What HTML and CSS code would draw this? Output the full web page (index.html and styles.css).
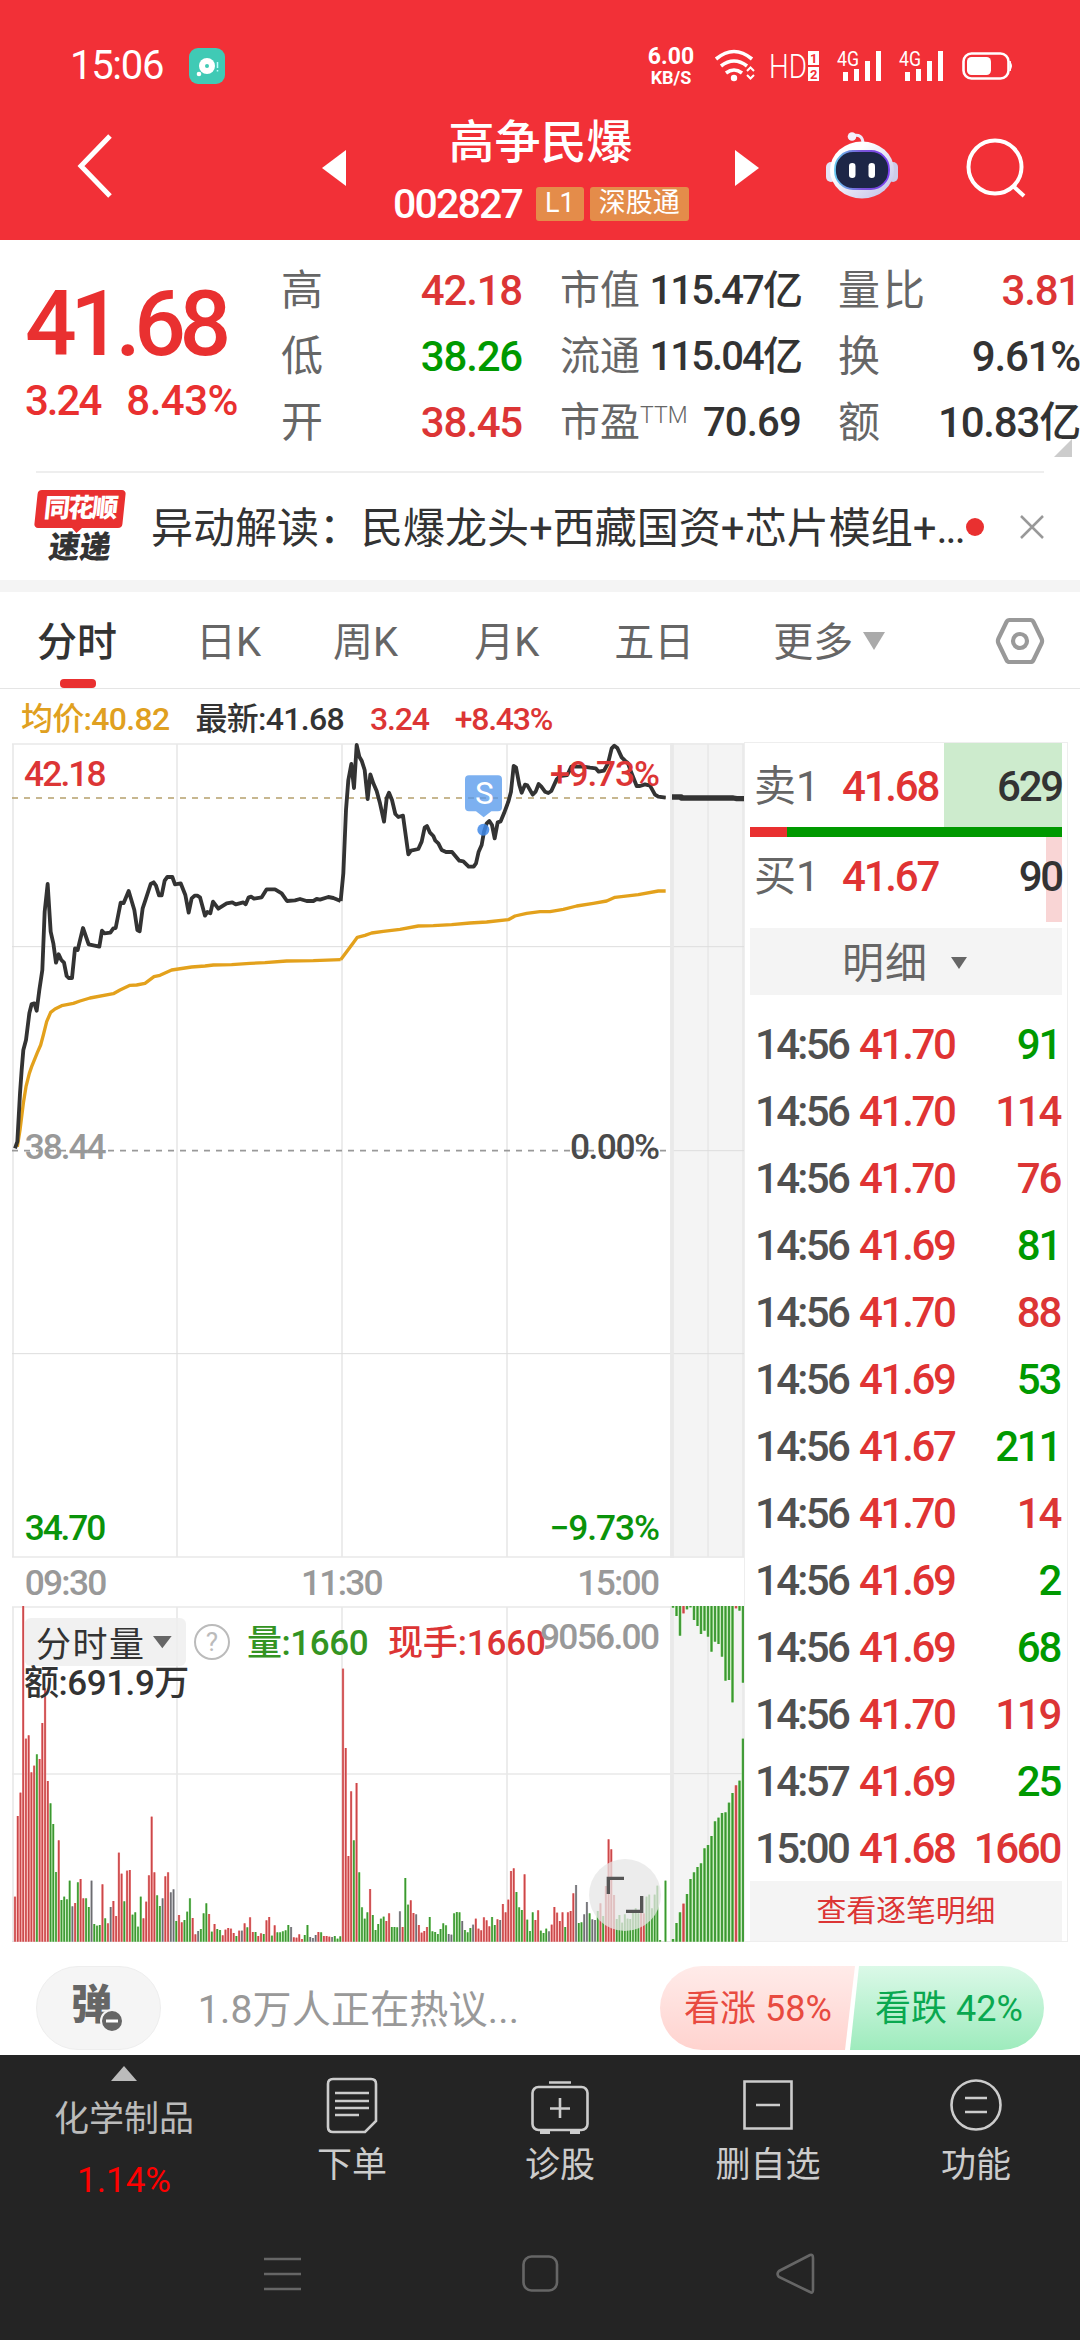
FILE: index.html
```html
<!doctype html>
<html lang="zh-CN">
<head>
<meta charset="utf-8">
<title>高争民爆 002827</title>
<link rel="stylesheet" href="styles.css">
</head>
<body>
<header>
  <div class="status">
    <span class="clock">15:06</span>
    <svg class="app" width="36" height="36" viewBox="0 0 36 36">
      <rect width="36" height="36" rx="9" fill="#40cab5"/>
      <circle cx="18" cy="18" r="8" fill="#fff"/><circle cx="18" cy="18" r="2" fill="#40cab5"/>
      <circle cx="10" cy="26" r="2.3" fill="#fff"/><path d="M28.500 14v6M28.500 22v1.500" stroke="#bff" stroke-width="1.500"/>
    </svg>
    <span class="speed"><b>6.00</b><i>KB/S</i></span>
    <svg class="signals" width="300" height="46" viewBox="712 43 300 46" fill="none" stroke="#fff">
      <path d="M715 59Q733 44 751 59M720 66Q733 56 746 66M725 73Q733 67 741 73" stroke-width="3.600"/>
      <circle cx="733" cy="78" r="3.200" fill="#fff" stroke="none"/>
      <path d="M746 71l3.500-3.500 3.500 3.500M746 75l3.500 3.500 3.500-3.500" stroke-width="2"/>
      <text x="768" y="78" class="hd" textLength="38" lengthAdjust="spacingAndGlyphs">HD</text>
      <path d="M807 51h11v14h-11zM807 67h11v14h-11z" fill="#fff" stroke="none"/>
      <text x="809" y="62.500" class="sim">1</text><text x="809" y="78.500" class="sim">2</text>
      <text x="836" y="66" class="g4" textLength="22" lengthAdjust="spacingAndGlyphs">4G</text>
      <path d="M844.500 72v9M855.500 69v12M866.500 61v20M877.500 51v30" stroke-width="5"/>
      <text x="898" y="66" class="g4" textLength="22" lengthAdjust="spacingAndGlyphs">4G</text>
      <path d="M906.500 72v9M917.500 69v12M928.500 61v20M939.500 51v30" stroke-width="5"/>
      <rect x="962.500" y="53.500" width="45" height="25" rx="8" stroke-width="2.600"/>
      <rect x="966" y="57" width="24" height="18" rx="4.500" fill="#fff" stroke="none"/>
      <path d="M1009 61q3 5 0 10z" fill="#fff"/>
    </svg>
  </div>
  <div class="titlebar">
    <svg class="back" width="40" height="68" viewBox="0 0 40 68"><path d="M37 4L8 34l29 30" fill="none" stroke="#fff" stroke-width="5"/></svg>
    <svg class="prev" width="24" height="36" viewBox="0 0 24 36"><path d="M24 0v36L0 18z" fill="#fff"/></svg>
    <div class="stock">
      <h1>高争民爆</h1>
      <p><span class="code">002827</span><em>L1</em><em>深股通</em></p>
    </div>
    <svg class="next" width="24" height="36" viewBox="0 0 24 36"><path d="M0 0v36L24 18z" fill="#fff"/></svg>
    <svg class="robot" width="74" height="68" viewBox="0 0 74 68">
      <defs>
        <linearGradient id="shell" x1="0" y1="0" x2="1" y2="1"><stop offset=".3" stop-color="#fff"/><stop offset="1" stop-color="#bdbce6"/></linearGradient>
        <linearGradient id="rim"><stop offset="0" stop-color="#67c7ef"/><stop offset=".5" stop-color="#7a55d8"/><stop offset="1" stop-color="#7b3ff0"/></linearGradient>
      </defs>
      <path d="M27 5q11-3 11 8" fill="none" stroke="#eee9fa" stroke-width="3"/>
      <circle cx="27" cy="5.500" r="4.300" fill="#f4f0fd"/>
      <rect x="1" y="31" width="10" height="20" rx="5" fill="#e4e3f5"/><rect x="63" y="31" width="10" height="20" rx="5" fill="#cccbe8"/>
      <ellipse cx="37" cy="39" rx="32" ry="28.500" fill="url(#shell)"/>
      <rect x="10" y="20" width="54" height="38" rx="18" fill="#1d2647" stroke="url(#rim)" stroke-width="1.800"/>
      <rect x="24" y="32" width="6.500" height="15" rx="3.200" fill="#fff"/><rect x="43.500" y="32" width="6.500" height="15" rx="3.200" fill="#fff"/>
    </svg>
    <svg class="search" width="62" height="62" viewBox="0 0 62 62" fill="none" stroke="#fff" stroke-width="4"><circle cx="29" cy="29" r="26.500"/><path d="M47 48l11 10"/></svg>
  </div>
</header>

<section class="quote">
  <div class="price"><strong>41.68</strong><p><span>3.24</span><span class="pct">8.43%</span></p></div>
  <dl>
    <div><dt>高</dt><dd class="red">42.18</dd></div>
    <div><dt>低</dt><dd class="green">38.26</dd></div>
    <div><dt>开</dt><dd class="red">38.45</dd></div>
  </dl>
  <dl class="cap">
    <div><dt>市值</dt><dd>115.47亿</dd></div>
    <div><dt>流通</dt><dd>115.04亿</dd></div>
    <div><dt>市盈<sup>TTM</sup></dt><dd class="pe">70.69</dd></div>
  </dl>
  <dl>
    <div><dt class="wide">量比</dt><dd class="red">3.81</dd></div>
    <div><dt>换</dt><dd>9.61%</dd></div>
    <div><dt>额</dt><dd>10.83亿</dd></div>
  </dl>
  <i class="corner"></i>
</section>

<section class="news">
  <div class="logo"><span>同花顺</span><b>速递</b></div>
  <p>异动解读<span class="colon">：</span>民爆龙头+西藏国资+芯片模组+<span class="dots">...</span></p>
  <i class="dot"></i>
  <svg width="24" height="24" viewBox="0 0 24 24"><path d="M1 1l22 22M23 1L1 23" stroke="#999" stroke-width="2.500"/></svg>
</section>

<nav class="tabs">
  <a class="active">分时</a><a>日K</a><a>周K</a><a>月K</a><a>五日</a><a>更多<i></i></a>
  <svg width="50" height="48" viewBox="0 0 50 48" fill="none" stroke="#999" stroke-width="4.200" stroke-linejoin="round"><path d="M14.500 3h21q2 0 3 2l8 16.500q1.200 2.500 0 5L38.500 43q-1 2-3 2h-21q-2 0-3-2l-8-16.500q-1.200-2.500 0-5L11.500 5q1-2 3-2z"/><circle cx="25" cy="24" r="7"/></svg>
</nav>

<div class="summary">
  <span class="avg">均价:40.82</span><span>最新:41.68</span><span class="red">3.24</span><span class="red">+8.43%</span>
</div>

<main>
  <!-- chart units are a third of a pixel -->
  <svg class="chart" width="744" height="1200" viewBox="0 66 2232 3600">
    <rect x="2010" y="70" width="222" height="3595" fill="#f4f4f4"/>
    <g stroke="#e9e9e9" stroke-width="5" fill="none">
      <path d="M36 72H2232M36 2511H2232M39 70V2513M531 70V2513M1026 70V2513M1521 70V2513M2124 70V2513M2229 70V2513"/>
      <path d="M36 2661H2232M36 3162H2014M39 2659V3665M531 2659V3665M1026 2659V3665M1521 2659V3665M2124 2659V3665M2229 2659V3665"/>
      <path d="M36 680H2232M36 1901H2232M2018 1292H2232M2018 3161H2232M36 3665H2232" stroke="#ddd" stroke-width="3"/>
      <path d="M2016 70V3665" stroke-width="11"/>
    </g>
    <rect x="36" y="2514" width="2196" height="144" fill="#fff"/>
    <path d="M36 234H2000" stroke="#b5a06c" stroke-width="5" stroke-dasharray="18 18"/>
    <path d="M36 1292H2000" stroke="#999" stroke-width="5" stroke-dasharray="18 18"/>
    <g id="bars"></g>
    <g class="avgline">
      <polyline points="52,1280 60,1230 70,1150 78,1100 88,1060 95,1040 105,1015 112,998 122,975 130,945 140,905 152,877 165,867 185,857 220,850 240,843 270,834 340,821 360,810 390,796 410,795 435,790 462,770 480,766 515,750 575,741 615,738 640,735 695,734 750,730 795,728 860,723 940,722 1022,719"/>
      <polyline transform="translate(990)" points="32,719 50,695 60,682 70,668 82,652 105,646 125,639 160,634 210,628 265,618 310,617 365,614 420,609 470,606 535,599 555,588 590,580 630,575 660,575 700,568 740,558 790,550 830,543 855,532 925,524 985,513 1007,513"/>
    </g>
    <g class="priceline">
      <polyline points="45,1285 52,1265 60,1120 65,1050 70,990 78,960 88,880 95,852 103,850 110,872 118,810 127,750 134,575 143,492 152,635 160,670 168,728 176,703 184,720 192,728 200,768 206,774 216,774 225,685 233,690 249,624 266,673 298,680 306,632 313,640 331,638 340,625 347,624 362,548 371,549 386,513 403,570 412,630 419,634 428,565 437,538 452,492 461,487 468,497 477,526 485,526 494,482 502,471 517,471 525,493 542,490 556,525 566,578 575,535 584,527 592,527 600,532 615,587 622,576 631,580 639,545 655,566 680,550 697,547 707,553 730,547 737,553 746,532 754,530 762,536 785,532 800,508 825,508 845,520 861,543 885,541 900,537 920,543 940,543 950,537 960,539 985,531 1000,534 1022,543"/>
      <polyline transform="translate(990)" points="32,543 40,460 48,270 55,180 64,132 72,204 80,75 88,110 95,122 104,150 113,237 121,163 130,190 140,213 150,250 162,305 170,235 177,218 186,240 196,282 205,291 219,287 235,403 243,392 265,387 275,365 284,323 291,318 300,338 310,348 316,362 325,370 335,390 348,396 366,396 388,422 400,424 416,440 431,440 438,430 446,395 455,375 462,335 470,310 478,303 486,315 494,355 503,307 512,304 522,280 535,245 543,215 551,138 558,142 568,195 575,218 585,194 592,196 608,224 617,215 626,192 634,200 645,215 655,219 664,213 680,178 690,168 712,165 724,140 760,140 780,143 797,145 806,155 822,152 834,130 845,85 853,77 862,84 875,112 885,122 893,128 905,160 920,198 930,198 945,193 960,197 975,224 985,230 1007,233"/>
      <path d="M2016 231H2044V234H2200L2210 236H2232" stroke-width="16"/>
    </g>
    <path d="M1407 166h87q12 0 12 12v84q0 12-12 12h-20l-23 18-23-18h-21q-12 0-12-12v-84q0-12 12-12z" fill="#5598ec" opacity=".77"/>
    <circle cx="1450" cy="329" r="18" fill="#3f88e8" opacity=".85"/>
    <text x="1425" y="251" class="flag" textLength="56" lengthAdjust="spacingAndGlyphs">S</text>
    <g class="axis">
      <text x="72" y="197" textLength="248" fill="#dc3535">42.18</text>
      <text x="1650" y="197" textLength="330" fill="#dc3535">+9.73%</text>
      <text x="74" y="1317" textLength="246" fill="#999">38.44</text>
      <text x="1710" y="1317" textLength="270" fill="#4a4a4a">0.00%</text>
      <text x="74" y="2461" textLength="245" fill="#0a930a">34.70</text>
      <text x="1648" y="2461" textLength="332" fill="#0a930a">−9.73%</text>
      <text x="74" y="2625" textLength="248" fill="#999">09:30</text>
      <text x="903" y="2625" textLength="248" fill="#999">11:30</text>
      <text x="1732" y="2625" textLength="248" fill="#999">15:00</text>
    </g>
    <rect x="74" y="2694" width="484" height="144" rx="18" fill="#eee" opacity=".85"/>
    <text x="108" y="2810" class="vol" textLength="324" fill="#333">分时量</text>
    <path d="M459 2748h56l-28 37z" fill="#666"/>
    <circle cx="636" cy="2766" r="51" fill="none" stroke="#bbb" stroke-width="6"/>
    <text x="636" y="2792" class="help">?</text>
    <g class="vol">
      <text x="741" y="2804" textLength="365" fill="#339422">量:1660</text>
      <text x="1164" y="2804" textLength="474" fill="#dc3535">现手:1660</text>
      <text x="72" y="2924" textLength="496" fill="#333">额:691.9万</text>
    </g>
    <g class="axis"><text x="1620" y="2786" textLength="360" fill="#999">9056.00</text></g>
    <circle cx="1875" cy="3525" r="108" fill="#e6e6e6" opacity=".75"/>
    <path d="M1825 3522V3475H1872M1925 3528V3574H1878" fill="none" stroke="#555" stroke-width="10"/>
  </svg>

  <aside>
    <div class="book sell"><span>卖1</span><b>41.68</b><i>629</i></div>
    <div class="ratio"><i></i></div>
    <div class="book buy"><span>买1</span><b>41.67</b><i>90</i></div>
    <div class="detail">明细<i></i></div>
    <table id="ticks"></table>
    <div class="more">查看逐笔明细</div>
  </aside>
</main>

<section class="talk">
  <span class="danmu">弹<svg width="24" height="26" viewBox="0 0 24 26"><circle cx="12" cy="13" r="11" fill="#666" stroke="#f5f5f5" stroke-width="2"/><path d="M6 13h12" stroke="#fff" stroke-width="3"/></svg></span>
  <p>1.8万人正在热议...</p>
  <div class="vote"><span class="up">看涨 58%</span><span class="down">看跌 42%</span></div>
</section>

<footer>
  <div class="toolbar">
    <div class="sector"><i></i><span>化学制品</span><em>1.14%</em></div>
    <div class="order"><svg width="60" height="60" viewBox="0 0 60 60"><path d="M11 4h38q5 0 5 5v37L43 57H11q-5 0-5-5V9q0-5 5-5z"/><path d="M13 18h34M13 26h34M13 33h34M13 40h24"/></svg><span>下单</span></div>
    <div class="diag"><svg width="60" height="60" viewBox="0 0 60 60"><rect x="2.500" y="12" width="55" height="43" rx="6"/><path d="M19 7.500h22M30 23v20M20 33.500h20"/><path d="M10 57h10M40 57h10" stroke-width="4"/></svg><span>诊股</span></div>
    <div class="del"><svg width="60" height="60" viewBox="0 0 60 60"><path d="M6.500 6.500h47v47h-47zM18 30h24"/></svg><span>删自选</span></div>
    <div class="func"><svg width="60" height="60" viewBox="0 0 60 60"><circle cx="30" cy="30" r="24.500"/><path d="M19 23h22M19 37h22"/></svg><span>功能</span></div>
  </div>
  <svg class="keys" width="1080" height="60" viewBox="0 0 1080 60" fill="none" stroke="#666" stroke-width="2.600">
    <path d="M264 15h37M264 30h37M264 45h37"/>
    <rect x="523.500" y="12.500" width="33.500" height="34" rx="8"/>
    <path d="M779 27L810 11q3-1 3 3v32q0 4-3 2L779 33q-3-3 0-6z"/>
  </svg>
</footer>
<script src="chart.js"></script>
</body>
</html>
```
FILE: styles.css
```css
* {
  box-sizing: border-box;
}
body, h1, p, dl, dd {
  margin: 0;
}
body {
  width: 1080px;
  height: 2340px;
  overflow: hidden;
  display: flex;
  flex-direction: column;
  background: #fff;
  color: #333;
  font-family: Roboto, "Noto Sans CJK SC", sans-serif;
  font-size: 42px;
  line-height: 1;
}
i, em {
  font-style: normal;
}
svg {
  display: block;
  flex: none;
}
.red { color: #dc3535; }
.green { color: #009900; }

/* header */
header {
  height: 240px;
  background: #f23037;
  color: #fff;
}
.status {
  display: flex;
  align-items: center;
  height: 96px;
  padding: 36px 0 0 70px;
}
.clock {
  width: 119px;
  font-size: 40px;
  letter-spacing: -1.3px;
}
.speed {
  width: 50px;
  margin: 0 17px 0 421px;
  display: flex;
  flex-direction: column;
  align-items: center;
}
.speed b {
  font-size: 23px;
  line-height: 23px;
  font-weight: 700;
}
.speed i {
  font-size: 18px;
  line-height: 20px;
  font-weight: 700;
}
.signals { overflow: visible; }
.signals text { stroke: none; fill: #fff; }
.signals .hd { font-size: 33px; font-weight: 300; }
.signals .g4 { font-size: 20px; }
.signals .sim { font-size: 13px; font-weight: 700; fill: #f23037; }
.titlebar {
  display: flex;
  height: 144px;
  padding-left: 73px;
}
.back { margin: 36px 209px 0 0; }
.prev, .next { margin-top: 54px; }
.stock {
  width: 389px;
  text-align: center;
}
.stock h1 {
  margin-top: 21px;
  font-size: 46px;
  line-height: 50px;
  font-weight: 500;
}
.stock p {
  display: flex;
  align-items: center;
  height: 34px;
  margin: 20px 0 0 47px;
}
.code {
  width: 143px;
  text-align: left;
  font-size: 41px;
  font-weight: 500;
  letter-spacing: -1.8px;
}
.stock em {
  height: 34px;
  margin-right: 6px;
  padding: 0 9px;
  border-radius: 3px;
  background: #e48c4a;
  font-size: 27px;
  line-height: 33px;
}
.robot { margin: 35px 67px 0 66px; }
.search { margin-top: 42px; }

/* quote */
.quote {
  position: relative;
  display: flex;
  height: 233px;
  padding-left: 25px;
}
.quote::after {
  content: "";
  position: absolute;
  left: 36px;
  right: 36px;
  bottom: 0;
  height: 2px;
  background: #eee;
}
.price {
  width: 256px;
  color: #e93030;
}
.price strong {
  display: block;
  margin-top: 39px;
  font-size: 91px;
  font-weight: 500;
  letter-spacing: -6.5px;
}
.price p {
  display: flex;
  gap: 26px;
  margin: 10px 0 0;
  font-weight: 500;
  letter-spacing: -2px;
}
.price .pct { letter-spacing: -.5px; }
.quote dl {
  width: 241px;
  margin: 18px 38px 0 0;
}
.quote dl:nth-of-type(3) {
  width: 242px;
  margin: 18px 0 0 -1px;
}
.quote dl div {
  display: flex;
  align-items: center;
  justify-content: space-between;
  height: 66px;
}
.quote dt {
  color: #666;
  white-space: nowrap;
}
.quote .wide { letter-spacing: 3px; }
.quote dd {
  font-weight: 500;
  letter-spacing: -1.2px;
  white-space: nowrap;
}
.quote .cap dt { font-size: 40px; }
.quote .cap dd { font-size: 40px; letter-spacing: -1.9px; }
.quote .cap .pe { letter-spacing: -.8px; }
.quote sup {
  font-size: 23px;
  line-height: 0;
  vertical-align: 13px;
  font-weight: 300;
}
.corner {
  position: absolute;
  right: 8px;
  top: 199px;
  border: solid transparent;
  border-width: 0 0 18px 18px;
  border-bottom-color: #ccc;
}

/* news */
.news {
  display: flex;
  align-items: center;
  height: 119px;
  padding: 0 36px;
  border-bottom: 12px solid #f4f4f4;
}
.logo {
  position: relative;
  width: 88px;
  height: 74px;
  text-align: center;
  font-size: 26px;
  font-weight: 900;
}
.logo span {
  display: block;
  height: 38px;
  border-radius: 4px;
  background: #e93030;
  color: #fff;
  line-height: 36px;
  letter-spacing: -2px;
  transform: skewX(-6deg);
}
.logo span::after {
  content: "";
  position: absolute;
  left: 37px;
  top: 37px;
  border: 6px solid transparent;
  border-top-color: #e93030;
}
.logo b {
  display: block;
  margin-top: 4px;
  font-size: 31px;
  line-height: 31px;
  font-weight: 900;
  transform: skewX(-8deg);
}
.news p {
  width: 815px;
  margin-left: 27px;
  white-space: nowrap;
  font-size: 42px;
}
.colon { font-family: "Noto Sans CJK TC", sans-serif; }
.dots { letter-spacing: -2px; }
.dot {
  width: 18px;
  height: 18px;
  border-radius: 50%;
  background: #e93030;
}
.news svg { margin-left: 36px; }

/* tabs */
.tabs {
  display: flex;
  align-items: center;
  height: 97px;
  padding: 2px 0 0 37px;
  border-bottom: 1px solid #e5e5e5;
  color: #666;
  font-size: 40px;
}
.tabs a {
  position: relative;
  height: 94px;
  line-height: 97px;
  margin-right: 79px;
  white-space: nowrap;
}
.tabs a:nth-child(2) { margin-right: 72px; }
.tabs a:nth-child(3) { margin-right: 76px; }
.tabs a:nth-child(4) { margin-right: 75px; }
.tabs a:nth-child(6) { margin: 0 110px 0 0; }
.tabs .active {
  color: #333;
  font-weight: 500;
}
.tabs .active::after {
  content: "";
  position: absolute;
  left: 23px;
  bottom: 0;
  width: 36px;
  height: 9px;
  border-radius: 4px;
  background: #e93030;
}
.tabs i {
  display: inline-block;
  margin-left: 10px;
  border: 11px solid transparent;
  border-top: 18px solid #aaa;
  border-bottom: 0;
  vertical-align: 6px;
}

.summary {
  display: flex;
  gap: 26px;
  height: 53px;
  padding: 0 21px;
  line-height: 60px;
  font-size: 32px;
  font-weight: 500;
  letter-spacing: -.7px;
}
.summary .red { letter-spacing: -1.2px; }
.avg { color: #e0a020; }

/* chart */
main {
  display: flex;
  height: 1200px;
}
.chart text { font-weight: 500; }
.axis { font-size: 106px; }
.vol { font-size: 105px; }
.chart .vol { font-weight: 400; }
.chart .flag { font-size: 92px; fill: #fff; font-weight: 400; }
.chart .help { font-size: 78px; fill: #bbb; text-anchor: middle; font-weight: 400; }
.priceline, .avgline {
  fill: none;
  stroke: #333;
  stroke-width: 11.5;
  stroke-linejoin: round;
}
.avgline {
  stroke: #e3a11c;
  stroke-width: 10;
}

/* order book */
aside {
  width: 324px;
  border: 1px solid #eee;
  padding: 0 5px;
}
.book {
  display: flex;
  align-items: center;
  height: 84px;
  padding: 4px 0 0 4px;
  letter-spacing: -2.2px;
}
.book span {
  width: 88px;
  color: #666;
  letter-spacing: 0;
}
.book b {
  width: 100px;
  color: #e03333;
  font-weight: 500;
}
.book i {
  margin-left: auto;
  font-weight: 500;
}
.sell { background: linear-gradient(#cdebcd, #cdebcd) right / 118px 100% no-repeat; }
.buy {
  height: 85px;
  padding: 0 0 5px 4px;
  background: linear-gradient(#f9d5d5, #f9d5d5) right / 16px 100% no-repeat;
}
.ratio {
  height: 10px;
  background: #009900;
}
.ratio i {
  display: block;
  width: 37px;
  height: 10px;
  background: #e93030;
}
.detail {
  display: flex;
  align-items: center;
  height: 67px;
  margin-top: 6px;
  padding: 4px 0 0 92px;
  background: #f4f4f4;
  color: #666;
  letter-spacing: 1px;
}
.detail i {
  margin: -2px 0 0 23px;
  border: 8px solid transparent;
  border-top: 12px solid #666;
  border-bottom: 0;
}
#ticks {
  width: 312px;
  margin-top: 16px;
  border-collapse: collapse;
  font-weight: 500;
  letter-spacing: -2.3px;
}
#ticks tr { height: 67px; }
#ticks td { padding: 0; }
#ticks td:first-child { width: 109px; padding-left: 5px; color: #505050; letter-spacing: -2.7px; }
#ticks td:nth-child(2) { width: 96px; color: #e03333; }
#ticks .red { color: #dc3535; }
#ticks td:last-child { padding-right: 2px; text-align: right; }
.more {
  height: 60px;
  margin-top: -1px;
  background: #f4f4f4;
  color: #dc3535;
  font-size: 29.8px;
  line-height: 59px;
  text-align: center;
}

/* comments and vote */
.talk {
  display: flex;
  height: 113px;
  padding: 24px 36px 0;
}
.danmu {
  position: relative;
  width: 125px;
  height: 84px;
  padding-left: 34px;
  border: 1px solid #eee;
  border-radius: 42px;
  background: #f5f5f5;
  color: #666;
  font-size: 41px;
  font-weight: 900;
  line-height: 77px;
}
.danmu svg {
  position: absolute;
  left: 63px;
  top: 41px;
}
.talk p {
  width: 463px;
  margin-left: 37px;
  color: #999;
  font-size: 39px;
  line-height: 88px;
  letter-spacing: .2px;
}
.vote {
  display: flex;
  font-size: 36px;
  line-height: 86px;
}
.up, .down {
  height: 84px;
}
.up {
  width: 195px;
  padding-left: 24px;
  border-radius: 42px 0 0 42px;
  background: linear-gradient(#ffebe9, #ffd3cf);
  color: #e84a40;
  clip-path: polygon(0 0, 100% 0, 185px 100%, 0 100%);
}
.down {
  width: 194px;
  margin-left: -5px;
  padding-left: 25px;
  border-radius: 0 42px 42px 0;
  background: linear-gradient(#dbf9e8, #9eebbd);
  color: #0aa850;
  clip-path: polygon(9px 0, 100% 0, 100% 100%, 0 100%);
}

/* bottom */
footer {
  height: 285px;
  background: #242424;
  color: #ccc;
}
.toolbar {
  display: flex;
  height: 189px;
  font-size: 35px;
}
.toolbar div {
  display: flex;
  flex-direction: column;
  align-items: center;
  padding-top: 20px;
  width: 208px;
}
.toolbar .sector {
  width: 248px;
  padding-top: 11px;
}
.sector i {
  border: 13px solid transparent;
  border-top: 0;
  border-bottom: 15px solid #bbb;
}
.sector span { margin-top: 21px; color: #bbb; }
.sector em { margin-top: 25px; color: #f00; }
.toolbar svg {
  fill: none;
  stroke: #ccc;
  stroke-width: 2.6;
}
.toolbar div span { line-height: 36px; }
.toolbar svg + span { margin-top: 13px; }
```
FILE: chart.js
```js
// top of each one-minute bar + colour: r up, g down, k flat
var am = '1190r 948r 878r 318r 716r 706r 817r 797r 763g 777r 669r 565r 843r 910g 972g 1116g 1021r 1200g 1190g 1198g 1142g 1219k 1209r 1147g 1137r 1195r 1195g 1221g 1142k 1272g 1277g 1275g 1153r 1255g 1270r 1221k 1203r 1248r 1058r 1121r 1204g 1112r 1110r 1244g 1237g 1280g 1190g 1255r 1205r 1126r 950r 1117r 1186g 1218g 1195k 1129r 1117r 1177k 1168k 1263g 1245r 1267r 1260g 1235g 1195g 1254r 1303r 1293k 1287g 1240g 1210g 1242r 1295g 1272r 1287g 1290g 1306r 1289r 1284r 1286r 1299r 1308g 1292r 1292k 1270r 1282g 1252r 1296r 1296g 1308r 1300r 1302g 1261r 1251r 1307g 1276r 1297g 1297g 1294g 1291g 1275g 1281k 1312r 1313r 1303r 1317r 1305g 1275g 1311k 1314k 1305k 1296r 1297g 1308r 1308r 1310r 1311k 1308g 1316g 1309g';
var pm = '506r 744r 1068r 874r 1021g 849r 1117g 1222g 1256g 1237g 1167r 1245g 1290g 1272g 1256g 1250g 1263r 1240r 1281g 1281g 1282g 1234k 1281r 1134g 1214g 1201r 1239r 1243k 1275r 1298r 1293r 1281r 1251g 1294g 1296g 1302g 1287g 1270g 1276g 1302k 1304k 1240g 1236g 1237g 1263k 1290g 1297g 1284g 1274k 1256r 1286r 1291r 1252r 1261r 1279r 1251g 1275g 1258r 1260k 1212r 1237r 1199r 1113r 1105r 1176g 1222g 1230g 1123r 1259g 1293g 1237g 1260r 1231r 1292g 1299g 1286g 1294k 1274r 1221r 1238r 1263r 1237r 1281g 1237r 1233r 1180r 1155k 1269g 1267g 1243k 1206k 1240g 1258k 1260k 1233g 1210r 1248g 1158r 1018r 1048r 1185r 1257g 1245g 1268g 1243g 1256g 1257g 1235g 1225g 1240g 1235r 1240r 1190g 1184g 1225g 1184g 1157g 1320g 1325g 1142g';
// closing auction: hanging bars and rising bars
var hang = '323g 348g 407g 340r 328g 322g 360g 378g 402g 392g 410g 455g 425g 432g 470g 542g 540g 607g 325r 332g 548g';
var rise = '1317g 1269g 1237g 1211r 1182g 1137g 1117g 1101g 1090g 1045g 1035g 1008g 964g 953g 939g 937g 908g 879g 856r 842g 716g';
var colors = {
  r: ['#f79a9a', '#c9484a'],
  g: ['#9ddc90', '#3c9632'],
  k: ['#c4c4c8', '#6c6c70']
};
var out = '';

function bars(list, x, step, w, hanging){
  list.split(' ').forEach(function(item, i){
    var c = colors[item.slice(-1)];
    var y = 2340 + parseInt(item, 10);
    var top = hanging ? 2658 : y;
    var h = hanging ? y - 2658 : 3665 - y;
    var left = x + i * step;
    out += '<rect x="' + (left - w / 2) + '" y="' + top + '" width="' + w + '" height="' + h + '" fill="' + c[0] + '"/>';
    out += '<rect x="' + (left - w / 4 - .5) + '" y="' + top + '" width="' + (w / 2 + 1) + '" height="' + h + '" fill="' + c[1] + '"/>';
  });
}
bars(am, 45, 8.2, 7, false);
bars(pm, 1029, 8.13, 7, false);
bars(hang, 2019, 10.5, 9, true);
bars(rise, 2019, 10.5, 9, false);
document.getElementById('bars').innerHTML = out;

var ticks = [
  ['14:56', '41.70', 91, 'green'],
  ['14:56', '41.70', 114, 'red'],
  ['14:56', '41.70', 76, 'red'],
  ['14:56', '41.69', 81, 'green'],
  ['14:56', '41.70', 88, 'red'],
  ['14:56', '41.69', 53, 'green'],
  ['14:56', '41.67', 211, 'green'],
  ['14:56', '41.70', 14, 'red'],
  ['14:56', '41.69', 2, 'green'],
  ['14:56', '41.69', 68, 'green'],
  ['14:56', '41.70', 119, 'red'],
  ['14:57', '41.69', 25, 'green'],
  ['15:00', '41.68', 1660, 'red']
];
document.getElementById('ticks').innerHTML = ticks.map(function(t){
  return '<tr><td>' + t[0] + '</td><td>' + t[1] + '</td><td class="' + t[3] + '">' + t[2] + '</td></tr>';
}).join('');
```
